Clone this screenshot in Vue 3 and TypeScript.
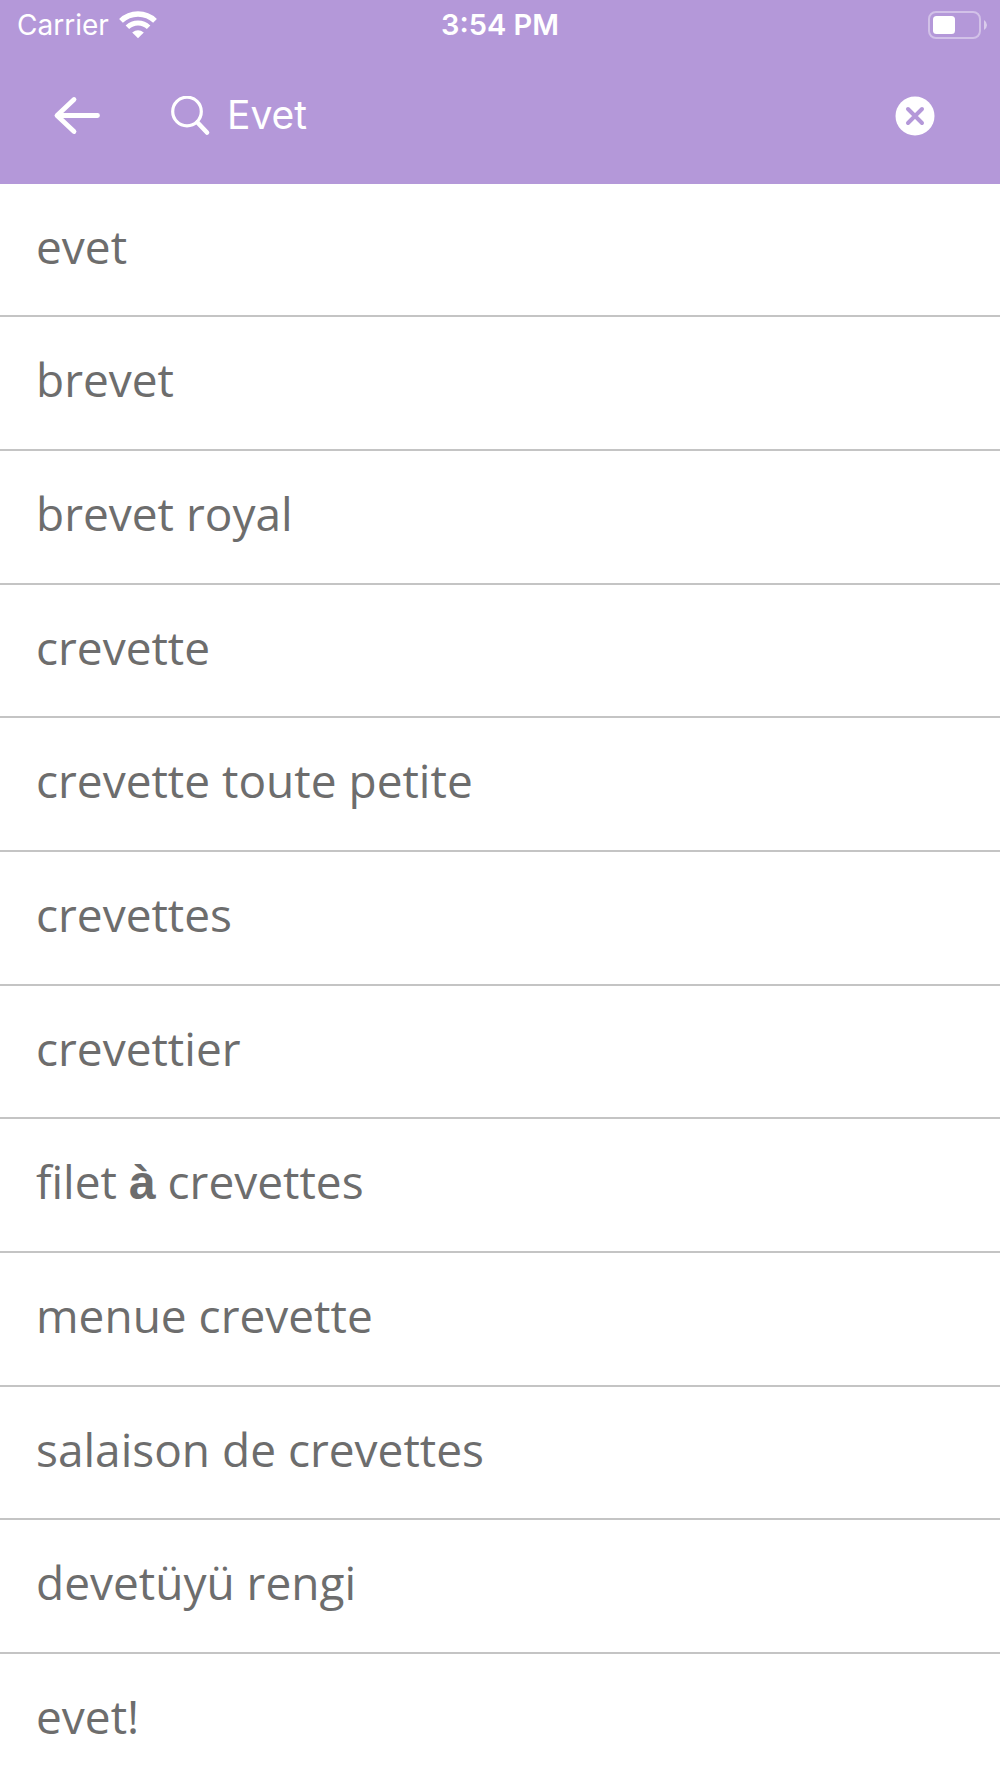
<script setup lang="ts">
import { ref } from 'vue'

interface Segment {
  text: string
  fallback?: boolean
}

const query = ref('Evet')

const results: Segment[][] = [
  [{ text: 'evet' }],
  [{ text: 'brevet' }],
  [{ text: 'brevet royal' }],
  [{ text: 'crevette' }],
  [{ text: 'crevette toute petite' }],
  [{ text: 'crevettes' }],
  [{ text: 'crevettier' }],
  [{ text: 'filet ' }, { text: 'à', fallback: true }, { text: ' crevettes' }],
  [{ text: 'menue crevette' }],
  [{ text: 'salaison de crevettes' }],
  [{ text: 'devetüyü rengi' }],
  [{ text: 'evet!' }],
]

function clearQuery(): void {
  query.value = ''
}
</script>

<template>
  <div class="screen">
    <header class="header">
      <div class="status">
        <div class="status-left">
          <span>Carrier</span>
          <svg width="38" height="28" viewBox="0 0 38 28" aria-hidden="true">
            <g fill="none" stroke="#fff">
              <path d="M2 9.9A24.5 24.5 0 0 1 36 9.9" stroke-width="5.4" />
              <path d="M8.4 16.3A15.2 15.2 0 0 1 29.6 16.3" stroke-width="5" />
            </g>
            <path d="M13.2 21.6Q19 16.8 24.8 21.6L19 27.2Z" fill="#fff" />
          </svg>
        </div>
        <time class="clock">3:54 PM</time>
        <div class="status-right">
          <svg width="60" height="28" viewBox="0 0 60 28" role="img" aria-label="Battery">
            <rect x="1" y="1" width="51" height="26" rx="7" fill="none" stroke="#fff" stroke-opacity=".4" stroke-width="2" />
            <rect x="5" y="5" width="22" height="18" rx="3.5" fill="#fff" />
            <path d="M56 9Q59 11 59 14T56 19Z" fill="#fff" fill-opacity=".5" />
          </svg>
        </div>
      </div>
      <form class="search" role="search" @submit.prevent>
        <button class="icon-button" type="button" aria-label="Back">
          <svg width="48" height="40" viewBox="0 0 48 40" aria-hidden="true">
            <path d="M45.5 19.5H5.5M22 3.5L5 19.5L22 35.5" fill="none" stroke="#fff" stroke-width="4.8" stroke-linecap="round" stroke-linejoin="round" />
          </svg>
        </button>
        <label class="field">
          <svg width="40" height="40" viewBox="0 0 40 40" aria-hidden="true">
            <circle cx="16" cy="15.5" r="14.3" fill="none" stroke="#fff" stroke-width="3.2" />
            <path d="M26.5 26.5L36 36.5" stroke="#fff" stroke-width="4.6" stroke-linecap="round" />
          </svg>
          <input v-model="query" type="text" aria-label="Search" />
        </label>
        <button class="icon-button" type="button" aria-label="Clear" @click="clearQuery">
          <svg width="40" height="40" viewBox="0 0 40 40" aria-hidden="true">
            <circle cx="20" cy="20" r="19.5" fill="#fff" />
            <path d="M13 13L27 27M27 13L13 27" stroke="#b498d9" stroke-width="4" stroke-linecap="round" />
          </svg>
        </button>
      </form>
    </header>
    <ul class="results">
      <li v-for="(segments, i) in results" :key="i">
        <span v-for="(s, j) in segments" :key="j" :class="{ fallback: s.fallback }">{{ s.text }}</span>
      </li>
    </ul>
  </div>
</template>

<style>
body {
  margin: 0;
  background: #fff;
}
</style>

<style scoped>
.screen {
  height: 100vh;
  overflow: hidden;
  background: #fff;
  font-family: "Open Sans", "Noto Sans", sans-serif;
}

.header {
  background: #b498d9;
  color: #fff;
  font-family: Inter, Roboto, sans-serif;
}

.status {
  display: grid;
  grid-template-columns: 1fr auto 1fr;
  align-items: center;
  height: 46px;
  padding: 2px 12px 0;
  font-size: 28px;
  line-height: 46px;
}

.status-left {
  display: flex;
  align-items: center;
  gap: 10px;
  padding-left: 5px;
}

.clock {
  font-size: 29px;
  font-weight: 600;
}

.status-right {
  display: flex;
  justify-content: flex-end;
}

.status svg,
.search svg {
  display: block;
  flex: none;
}

.search {
  display: flex;
  align-items: center;
  height: 136px;
  padding: 0 65px 0 52px;
}

.icon-button {
  padding: 0;
  border: 0;
  background: none;
  cursor: pointer;
}

.field {
  flex: 1;
  display: flex;
  align-items: center;
  gap: 16px;
  margin-left: 71px;
}

.field input {
  flex: 1;
  min-width: 0;
  padding: 0 0 2px;
  border: 0;
  outline: 0;
  background: none;
  color: #fff;
  font: 400 39px/48px Inter, Roboto, sans-serif;
}

.results {
  margin: 0;
  padding: 0;
  list-style: none;
}

.results li {
  height: 132px;
  padding: 0 36px;
  border-bottom: 2px solid #c4c4c4;
  color: #6d6d6d;
  font-size: 46px;
  line-height: 124px;
  white-space: pre;
}

.results li:nth-child(3n + 1) {
  height: 131px;
}

.fallback {
  font-family: "Liberation Sans", Arial, sans-serif;
  font-size: 48px;
  font-weight: 700;
  line-height: 1;
}
</style>
